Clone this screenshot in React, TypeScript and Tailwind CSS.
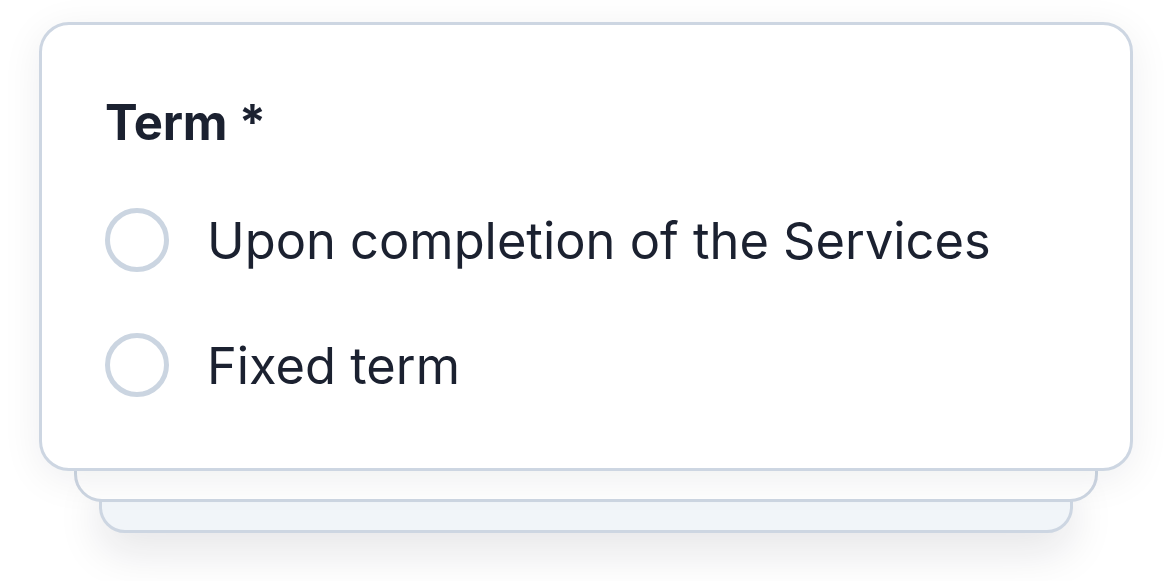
import React from "react";

function Radio({ label }: { label: string }) {
  return (
    <label className="flex items-center gap-[38px] h-[64px]">
      <span className="block w-[64px] h-[64px] rounded-full border-[5px] border-[#cbd5e1] bg-white shrink-0" />
      <span className="text-[50.6px] leading-none text-[#1b2130] pt-[3px]">{label}</span>
    </label>
  );
}

export default function App() {
  return (
    <div
      className="w-[1168px] h-[581px] bg-white overflow-hidden"
      style={{ fontFamily: "Inter, 'Noto Sans', sans-serif" }}
    >
      <div className="flex flex-col ml-[39px] mt-[22px] w-[1094px]">
        <div className="relative z-30 h-[449px] rounded-[30px] border-[3px] border-[#cdd6e2] bg-white shadow-[0_8px_40px_rgba(15,23,42,0.07)] pl-[63px] pt-[73px]">
          <h2 className="text-[49px] font-bold leading-none text-[#1b2130] tracking-[-0.2px]">Term *</h2>
          <div className="mt-[61px] flex flex-col gap-[61px]">
            <Radio label="Upon completion of the Services" />
            <Radio label="Fixed term" />
          </div>
        </div>
        <div className="relative z-20 mx-[35px] -mt-[40px] h-[71px] rounded-[28px] border-[3px] border-[#cdd6e2] bg-white" />
        <div className="relative z-10 mx-[60px] -mt-[40px] h-[71px] rounded-[26px] border-[3px] border-[#cdd6e2] bg-[#f1f5f9] shadow-[0_20px_44px_rgba(15,23,42,0.10)]" />
      </div>
    </div>
  );
}
